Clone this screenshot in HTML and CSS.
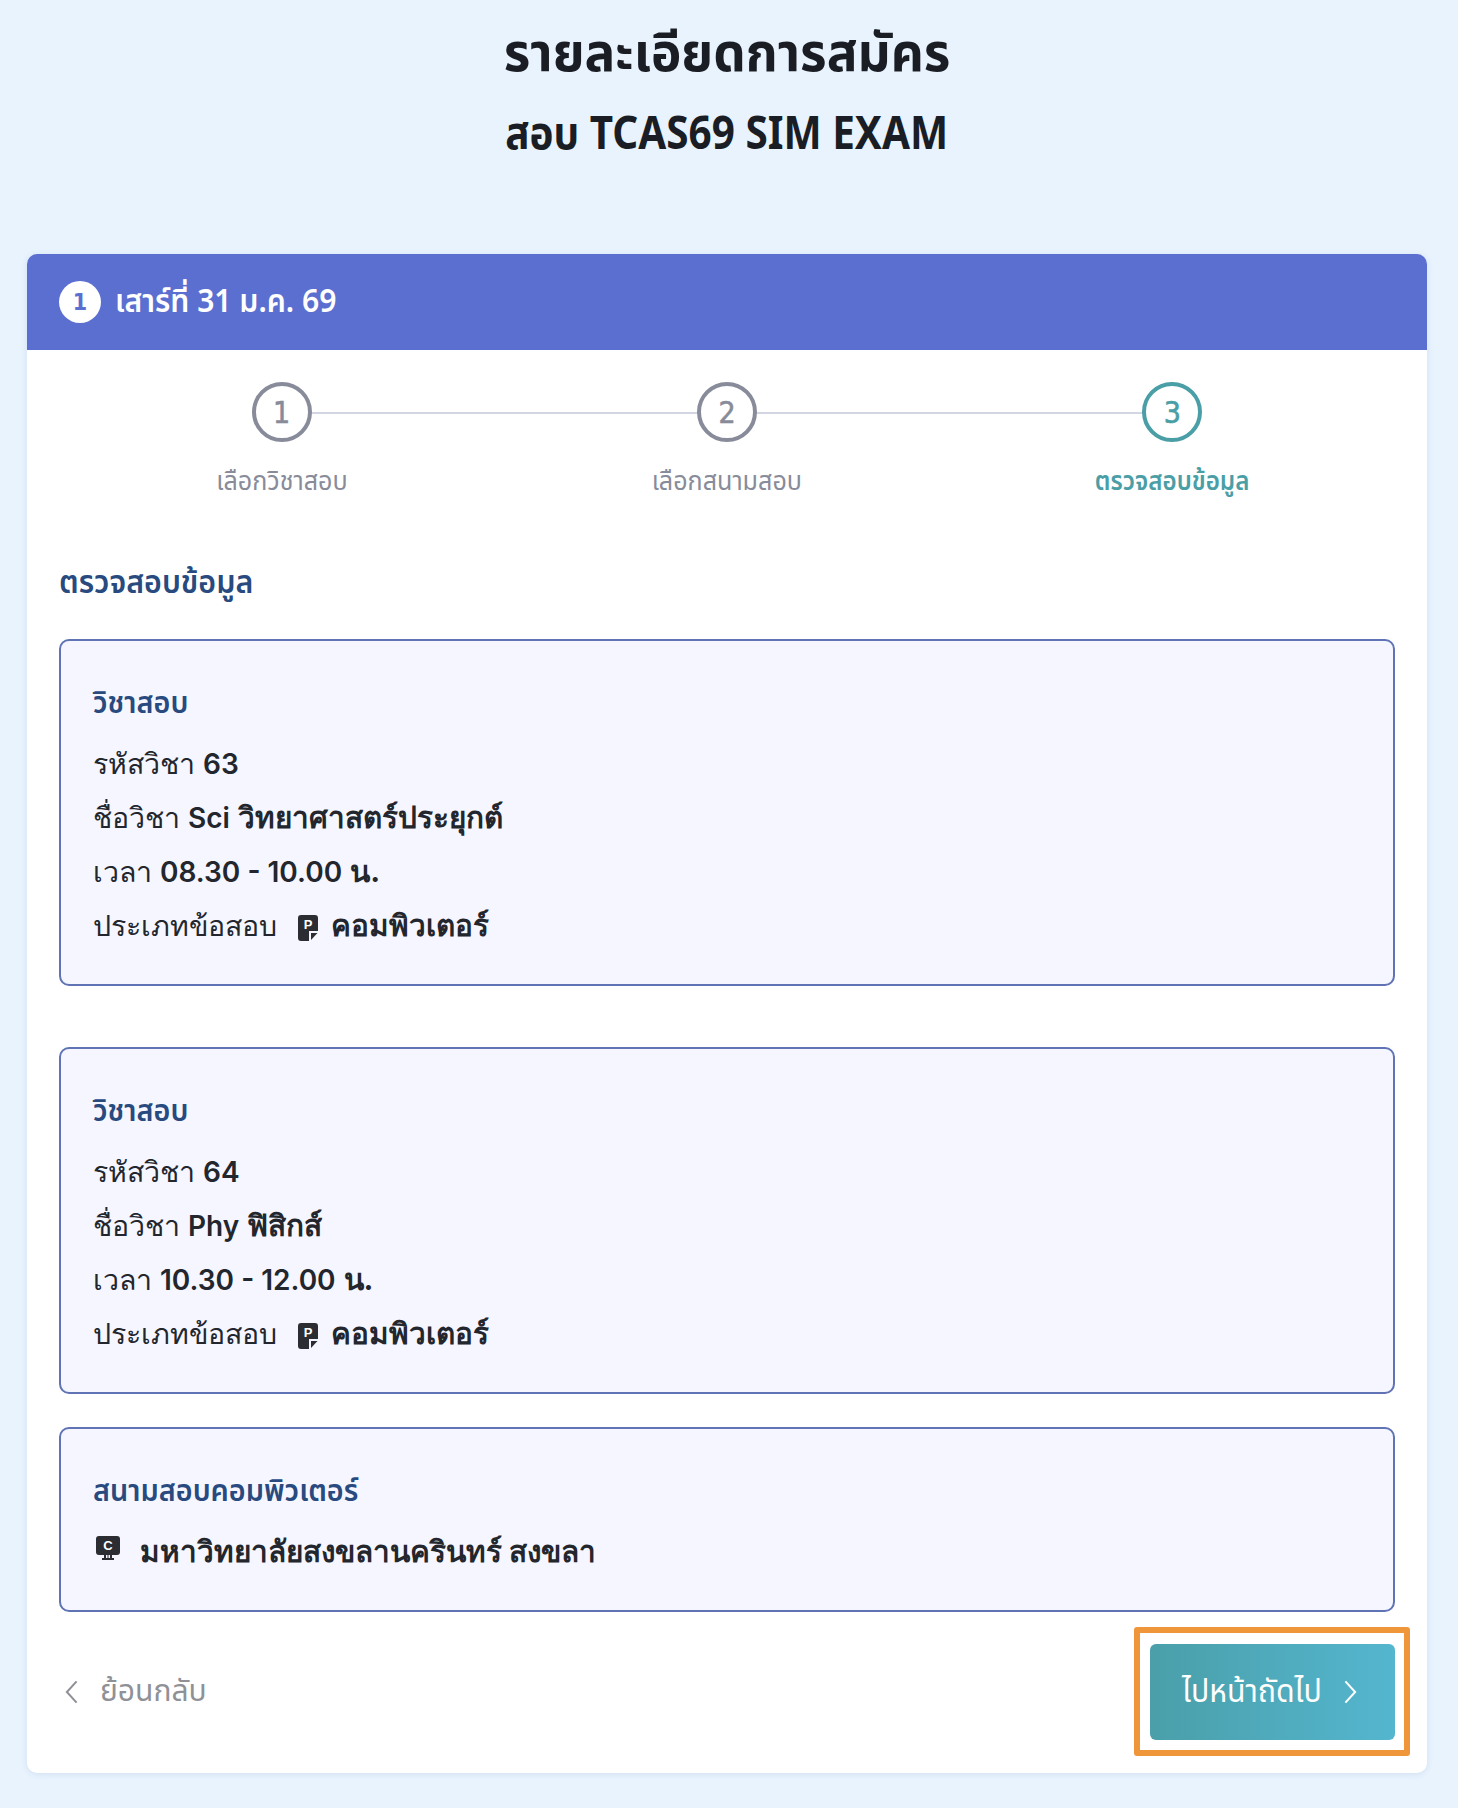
FILE: index.html
```html
<!DOCTYPE html>
<html lang="th">
<head>
  <meta charset="UTF-8">
  <meta name="viewport" content="width=device-width, initial-scale=1.0">
  <title>รายละเอียดการสมัคร</title>
  <link rel="stylesheet" href="styles.css">
</head>
<body>
  <header class="page-head">
    <h1><span class="tight">รายละเอียดการสมัคร</span></h1>
    <h2><span class="tight">สอบ TCAS69 SIM EXAM</span></h2>
  </header>

  <main class="card">
    <div class="card-head">
      <span class="day-num">1</span>
      <span class="day-text">เสาร์ที่ 31 ม.ค. 69</span>
    </div>

    <div class="card-body">
      <ol class="steps">
        <li class="step"><span class="step-dot">1</span><span class="step-label">เลือกวิชาสอบ</span></li>
        <li class="step"><span class="step-dot">2</span><span class="step-label">เลือกสนามสอบ</span></li>
        <li class="step step-active"><span class="step-dot">3</span><span class="step-label">ตรวจสอบข้อมูล</span></li>
      </ol>

      <h3 class="section-title"><span class="tight">ตรวจสอบข้อมูล</span></h3>

      <section class="box box-first">
        <h4 class="box-title"><span class="tight">วิชาสอบ</span></h4>
        <p class="row">รหัสวิชา <b>63</b></p>
        <p class="row">ชื่อวิชา <b>Sci</b> <b class="strong">วิทยาศาสตร์ประยุกต์</b></p>
        <p class="row">เวลา <b>08.30 - 10.00</b> <b class="strong">น.</b></p>
        <p class="row">ประเภทข้อสอบ
          <svg class="ico" viewBox="0 0 20 26" aria-hidden="true"><path d="M3 0h14a3 3 0 0 1 3 3v13h-9v10H3a3 3 0 0 1-3-3V3a3 3 0 0 1 3-3z" fill="#2b2d33"/><path d="M13 18h6.500L13 25z" fill="#2b2d33"/><text x="10" y="14" text-anchor="middle" class="ico-letter">P</text></svg>
          <b class="strong">คอมพิวเตอร์</b></p>
      </section>

      <section class="box box-second">
        <h4 class="box-title"><span class="tight">วิชาสอบ</span></h4>
        <p class="row">รหัสวิชา <b>64</b></p>
        <p class="row">ชื่อวิชา <b>Phy</b> <b class="strong">ฟิสิกส์</b></p>
        <p class="row">เวลา <b>10.30 - 12.00</b> <b class="strong">น.</b></p>
        <p class="row">ประเภทข้อสอบ
          <svg class="ico" viewBox="0 0 20 26" aria-hidden="true"><path d="M3 0h14a3 3 0 0 1 3 3v13h-9v10H3a3 3 0 0 1-3-3V3a3 3 0 0 1 3-3z" fill="#2b2d33"/><path d="M13 18h6.500L13 25z" fill="#2b2d33"/><text x="10" y="14" text-anchor="middle" class="ico-letter">P</text></svg>
          <b class="strong">คอมพิวเตอร์</b></p>
      </section>

      <section class="box box-venue">
        <h4 class="box-title"><span class="tight">สนามสอบคอมพิวเตอร์</span></h4>
        <p class="row">
          <svg class="ico-pc" viewBox="0 0 24 24" aria-hidden="true"><rect width="24" height="19" rx="3" fill="#2b2d33"/><path d="M8 19h2v3h1.500v-3h1v3H14v-3h2v3h2v2H6v-2h2z" fill="#2b2d33"/><text x="12" y="14" text-anchor="middle" class="ico-letter">C</text></svg>
          <b class="strong">มหาวิทยาลัยสงขลานครินทร์ สงขลา</b></p>
      </section>

      <div class="actions">
        <a class="back" href="#">
          <svg class="chev" viewBox="0 0 14 26" aria-hidden="true"><path d="M12.500 1.500 2 13l10.500 11.500" fill="none" stroke="#8f9196" stroke-width="2.200"/></svg>
          <span>ย้อนกลับ</span>
        </a>
        <div class="next-mark">
          <a class="next" href="#">
            <span class="next-text">ไปหน้าถัดไป</span>
            <svg class="chev" viewBox="0 0 14 26" aria-hidden="true"><path d="M1.500 1.500 12 13 1.500 24.500" fill="none" stroke="#fff" stroke-width="2.200"/></svg>
          </a>
        </div>
      </div>
    </div>
  </main>
</body>
</html>
```

FILE: styles.css
```css
html {
  --bg: #e8f3fe;
  --indigo: #5b6fd1;
  --navy: #284a7e;
  --teal: #4a9ea6;
  --ink: #23262d;
  --grey: #888b99;
}

html, body {
  margin: 0;
  padding: 0;
}

body {
  background-color: var(--bg);
  color: var(--ink);
  font-family: "Noto Sans", "Noto Sans Thai", sans-serif;
  padding: 0 31px 34px 27px;
}

/* the original heading face is narrower than Noto */
.tight {
  display: inline-block;
  transform: scaleX(var(--squeeze, 1));
}

.page-head {
  height: 254px;
  text-align: center;
  color: #1a1d24;
}

.page-head h1 {
  --squeeze: 0.95;
  margin: 0;
  padding-top: 10px;
  font-size: 54px;
  line-height: 80px;
  font-weight: 700;
}

.page-head h2 {
  --squeeze: 0.88;
  margin: 0;
  padding-top: 8px;
  font-size: 46px;
  line-height: 66px;
  font-weight: 700;
}

.card {
  background: #fff;
  border-radius: 10px;
  overflow: hidden;
  box-shadow: 0 1px 6px rgba(60, 80, 140, 0.12);
}

.card-head {
  display: flex;
  align-items: center;
  gap: 14px;
  height: 96px;
  padding-left: 32px;
  background-color: var(--indigo);
  color: #fff;
}

.day-num {
  display: flex;
  align-items: center;
  justify-content: center;
  width: 42px;
  height: 42px;
  border-radius: 50%;
  background: #fff;
  color: var(--indigo);
  font-family: "DejaVu Sans Condensed", sans-serif;
  font-size: 23px;
  font-weight: 700;
}

.day-text {
  display: inline-block;
  font-size: 32px;
  font-weight: 600;
  transform: scaleX(0.94);
  transform-origin: left center;
}

.card-body {
  padding: 32px 32px 0;
}

.steps {
  display: grid;
  grid-template-columns: repeat(3, 1fr);
  margin: 0 -32px;
  padding: 0 32px;
  list-style: none;
}

.step {
  position: relative;
  display: flex;
  flex-direction: column;
  align-items: center;
  gap: 19px;
}

.step:not(:last-child)::after {
  content: "";
  position: absolute;
  top: 30px;
  left: 50%;
  width: 100%;
  height: 2px;
  background: #d3d6e2;
}

.step-dot {
  position: relative;
  z-index: 1;
  display: flex;
  align-items: center;
  justify-content: center;
  box-sizing: border-box;
  width: 60px;
  height: 60px;
  border: 4px solid var(--grey);
  border-radius: 50%;
  background: #fff;
  color: var(--grey);
  font-family: "DejaVu Sans Condensed", sans-serif;
  font-size: 30px;
  -webkit-text-stroke: 0.6px currentColor;
}

.step-label {
  color: var(--grey);
  font-size: 26px;
  line-height: 38px;
  transform: scaleX(0.966);
}

.step-active .step-dot {
  border-color: var(--teal);
  color: var(--teal);
}

.step-active .step-label {
  color: var(--teal);
  font-weight: 600;
  transform: scaleX(0.93);
}

.section-title {
  --squeeze: 0.95;
  margin: 58px 0 34px;
  color: var(--navy);
  font-size: 32px;
  line-height: 48px;
  font-weight: 600;
}

.section-title .tight,
.box-title .tight {
  transform-origin: left center;
}

.box {
  box-sizing: border-box;
  padding: 37px 32px 0;
  border: 2px solid #5f73b5;
  border-radius: 10px;
  background: #f5f6ff;
}

.box-first,
.box-second {
  height: 347px;
}

.box-first {
  margin-bottom: 61px;
}

.box-second {
  margin-bottom: 33px;
}

.box-venue {
  height: 185px;
}

.box-title {
  --squeeze: 0.96;
  margin: 0 0 11px;
  color: var(--navy);
  font-size: 30px;
  line-height: 48px;
  font-weight: 600;
}

.row {
  margin: 0;
  font-family: Inter, sans-serif;
  font-size: 28.500px;
  line-height: 54px;
}

.row b {
  font-size: 28px;
  font-weight: 600;
  line-height: 1;
}

.row .strong {
  font-size: 29.700px;
  font-weight: 700;
}

.ico {
  width: 20px;
  height: 26px;
  margin: 0 5px 0 13px;
  vertical-align: -5px;
}

.ico-pc {
  width: 24px;
  height: 24px;
  margin: 0 12px 0 3px;
  vertical-align: 2px;
}

.ico-letter {
  fill: #fff;
  font-family: "Liberation Sans", sans-serif;
  font-size: 13px;
  font-weight: 700;
}

.actions {
  display: flex;
  align-items: center;
  justify-content: space-between;
  margin: 15px -15px 0 0;
  padding-bottom: 17px;
}

.back {
  display: flex;
  align-items: center;
  gap: 22px;
  padding-left: 6px;
  color: #8f9196;
  font-size: 30px;
  text-decoration: none;
}

.chev {
  width: 13px;
  height: 24px;
}

.next-mark {
  padding: 11px 9px 10px 10px;
  border: 6px solid #f0963a;
  border-radius: 3px;
}

.next {
  display: flex;
  align-items: center;
  justify-content: center;
  gap: 18px;
  box-sizing: border-box;
  width: 245px;
  height: 96px;
  padding-right: 10px;
  border-radius: 6px;
  background: linear-gradient(90deg, #4a9fa9, #54b6cf);
  color: #fff;
  font-size: 32px;
  text-decoration: none;
}

.next-text {
  transform: scaleX(0.945);
}
```
